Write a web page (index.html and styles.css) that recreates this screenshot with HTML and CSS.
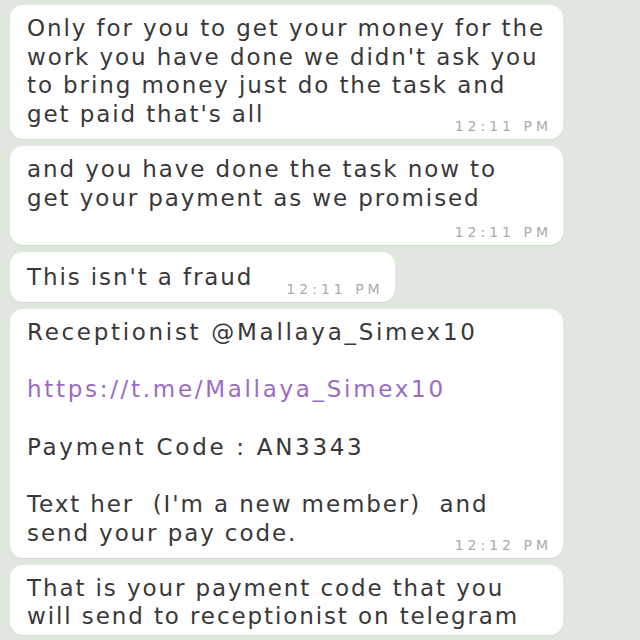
FILE: index.html
```html
<!DOCTYPE html>
<html lang="en">
<head>
<meta charset="utf-8">
<title>Chat</title>
<link rel="stylesheet" href="styles.css">
</head>
<body>
<div class="chat">
  <div class="bubble wide">
    <div class="line">Only for you to get your money for the</div>
    <div class="line">work you have done we didn't ask you</div>
    <div class="line">to bring money just do the task and</div>
    <div class="lastrow">
      <span class="line">get paid that's all</span>
      <span class="time">12:11 PM</span>
    </div>
  </div>
  <div class="bubble wide">
    <div class="line">and you have done the task now to</div>
    <div class="line">get your payment as we promised</div>
    <div class="timerow"><span class="time">12:11 PM</span></div>
  </div>
  <div class="bubble short">
    <div class="lastrow">
      <span class="line">This isn't a fraud</span>
      <span class="time">12:11 PM</span>
    </div>
  </div>
  <div class="bubble wide">
    <div class="line caps">Receptionist @Mallaya_Simex10</div>
    <div class="line blank">&nbsp;</div>
    <div class="line link caps">https://t.me/Mallaya_Simex10</div>
    <div class="line blank">&nbsp;</div>
    <div class="line caps">Payment Code : AN3343</div>
    <div class="line blank">&nbsp;</div>
    <div class="line">Text her&nbsp; (I'm a new member)&nbsp; and</div>
    <div class="lastrow">
      <span class="line">send your pay code.</span>
      <span class="time">12:12 PM</span>
    </div>
  </div>
  <div class="bubble wide">
    <div class="line">That is your payment code that you</div>
    <div class="line">will send to receptionist on telegram</div>
  </div>
</div>
</body>
</html>
```
FILE: styles.css
```css
html, body {
  margin: 0;
  padding: 0;
  height: 100%;
  overflow: hidden;
}
body {
  background: #dfe7df;
  font-family: "DejaVu Sans", "Noto Sans", sans-serif;
}
.chat {
  display: flex;
  flex-direction: column;
  align-items: flex-start;
  gap: 7px;
  padding: 5px 0 0 10px;
}
.bubble {
  background: #ffffff;
  border-radius: 13px;
  padding: 9px 14px 4px 17px;
  box-sizing: border-box;
  box-shadow: 0 1px 1px rgba(0, 0, 0, 0.06);
}
.bubble.wide {
  width: 553px;
}
.bubble.short {
  padding-top: 11px;
}
.line {
  display: block;
  font-size: 23px;
  line-height: 28.7px;
  color: #383838;
  letter-spacing: 1.9px;
  white-space: nowrap;
}
.line.caps {
  letter-spacing: 2.7px;
}
.link {
  color: #9b6bc4;
}
.lastrow {
  display: flex;
  align-items: flex-end;
  justify-content: space-between;
  gap: 33px;
  margin-bottom: 6px;
}
.timerow {
  display: flex;
  justify-content: flex-end;
  margin-top: 11px;
}
.time {
  font-size: 14px;
  line-height: 18px;
  color: #ababab;
  letter-spacing: 4px;
  margin-bottom: -6px;
  margin-right: -3px;
}
.timerow .time {
  margin-bottom: 0;
}
```
